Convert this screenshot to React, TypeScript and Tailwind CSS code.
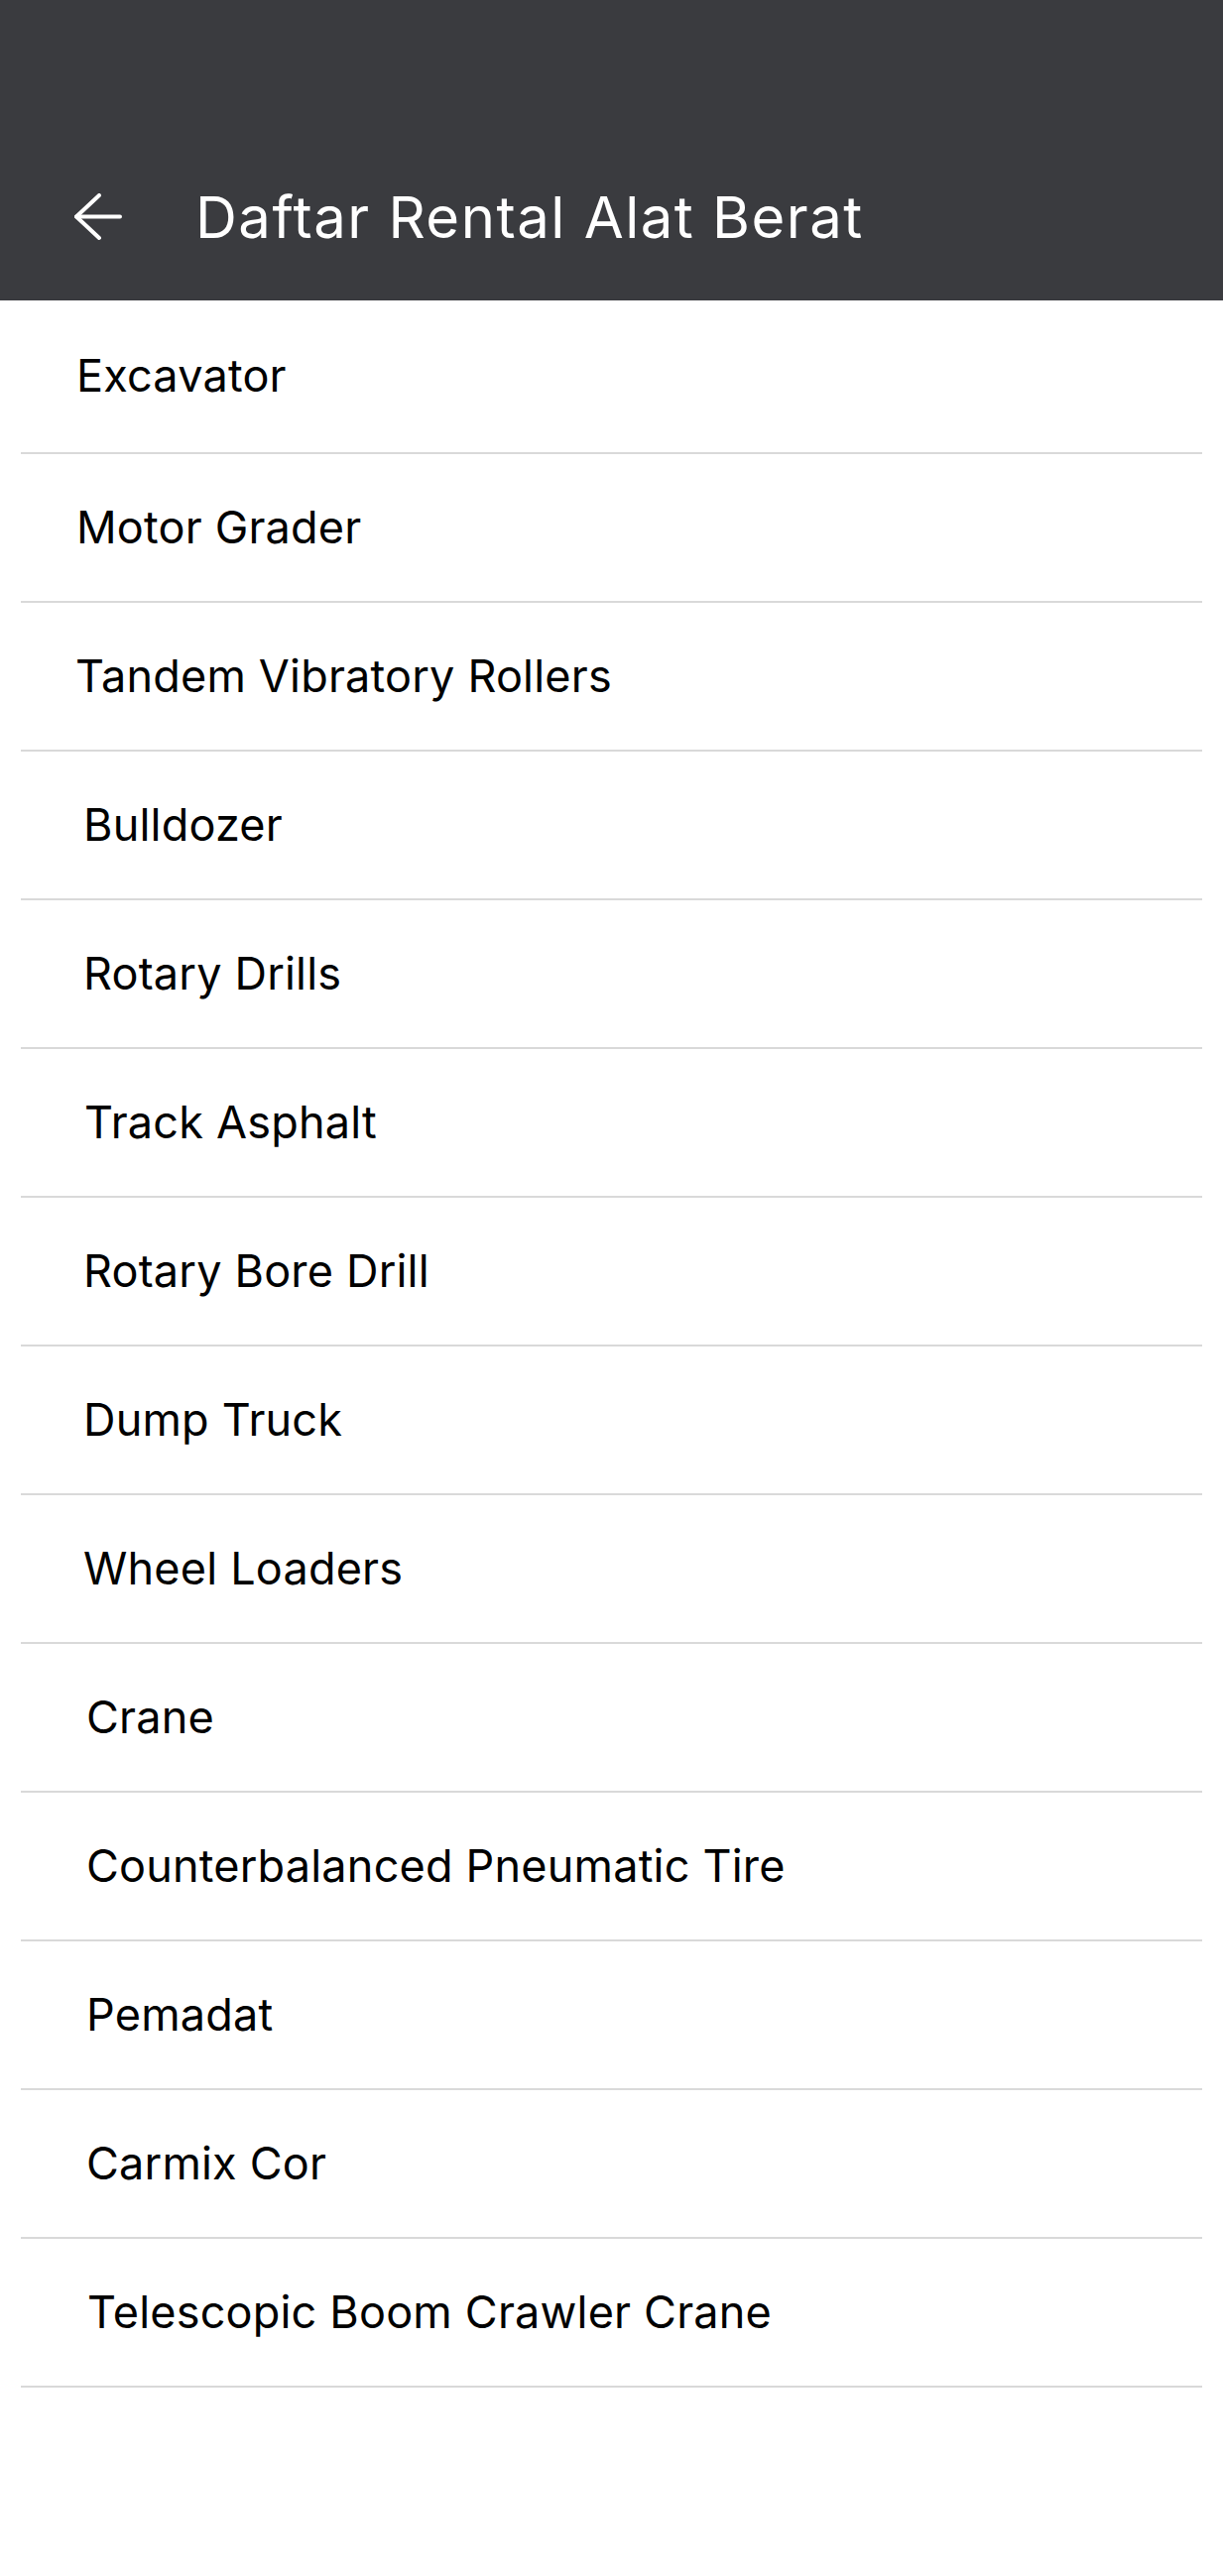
const items = [
  { name: "Excavator", pad: "pl-[56px]" },
  { name: "Motor Grader", pad: "pl-[56px]" },
  { name: "Tandem Vibratory Rollers", pad: "pl-[55px]" },
  { name: "Bulldozer", pad: "pl-[63px]" },
  { name: "Rotary Drills", pad: "pl-[63px]" },
  { name: "Track Asphalt", pad: "pl-[64px]" },
  { name: "Rotary Bore Drill", pad: "pl-[63px]" },
  { name: "Dump Truck", pad: "pl-[63px]" },
  { name: "Wheel Loaders", pad: "pl-[63px]" },
  { name: "Crane", pad: "pl-[66px]" },
  { name: "Counterbalanced Pneumatic Tire", pad: "pl-[66px]" },
  { name: "Pemadat", pad: "pl-[66px]" },
  { name: "Carmix Cor", pad: "pl-[66px]" },
  { name: "Telescopic Boom Crawler Crane", pad: "pl-[67px]" },
];

function BackArrow() {
  return (
    <svg width="48" height="48" viewBox="0 0 48 48" fill="none" stroke="#ffffff" strokeWidth="4" strokeLinecap="round" strokeLinejoin="round">
      <path d="M46 23.5H2" />
      <path d="M25 2L2 23.5L25 45" />
    </svg>
  );
}

export default function App() {
  return (
    <div className="min-h-[2598px] w-full bg-white font-['Inter','Noto_Sans',sans-serif]">
      <header className="h-[303px] bg-[#3a3b3f] pt-[134px]">
        <div className="h-[169px] flex items-center pl-[75px]">
          <button className="w-[48px] h-[48px] flex items-center justify-center">
            <BackArrow />
          </button>
          <h1 className="ml-[74px] text-[58px] leading-none font-normal tracking-[1.5px] text-white">Daftar Rental Alat Berat</h1>
        </div>
      </header>

      <ul className="mx-[21px]">
        {items.map((it, i) => (
          <li
            key={it.name}
            className={(i === 0 ? "h-[155px] " : "h-[150px] ") + "flex items-center border-b-2 border-[#d9d9d9] " + it.pad}
          >
            <span className="text-[45px] leading-none tracking-[0.2px] text-black -mt-[2px]">{it.name}</span>
          </li>
        ))}
      </ul>
    </div>
  );
}
